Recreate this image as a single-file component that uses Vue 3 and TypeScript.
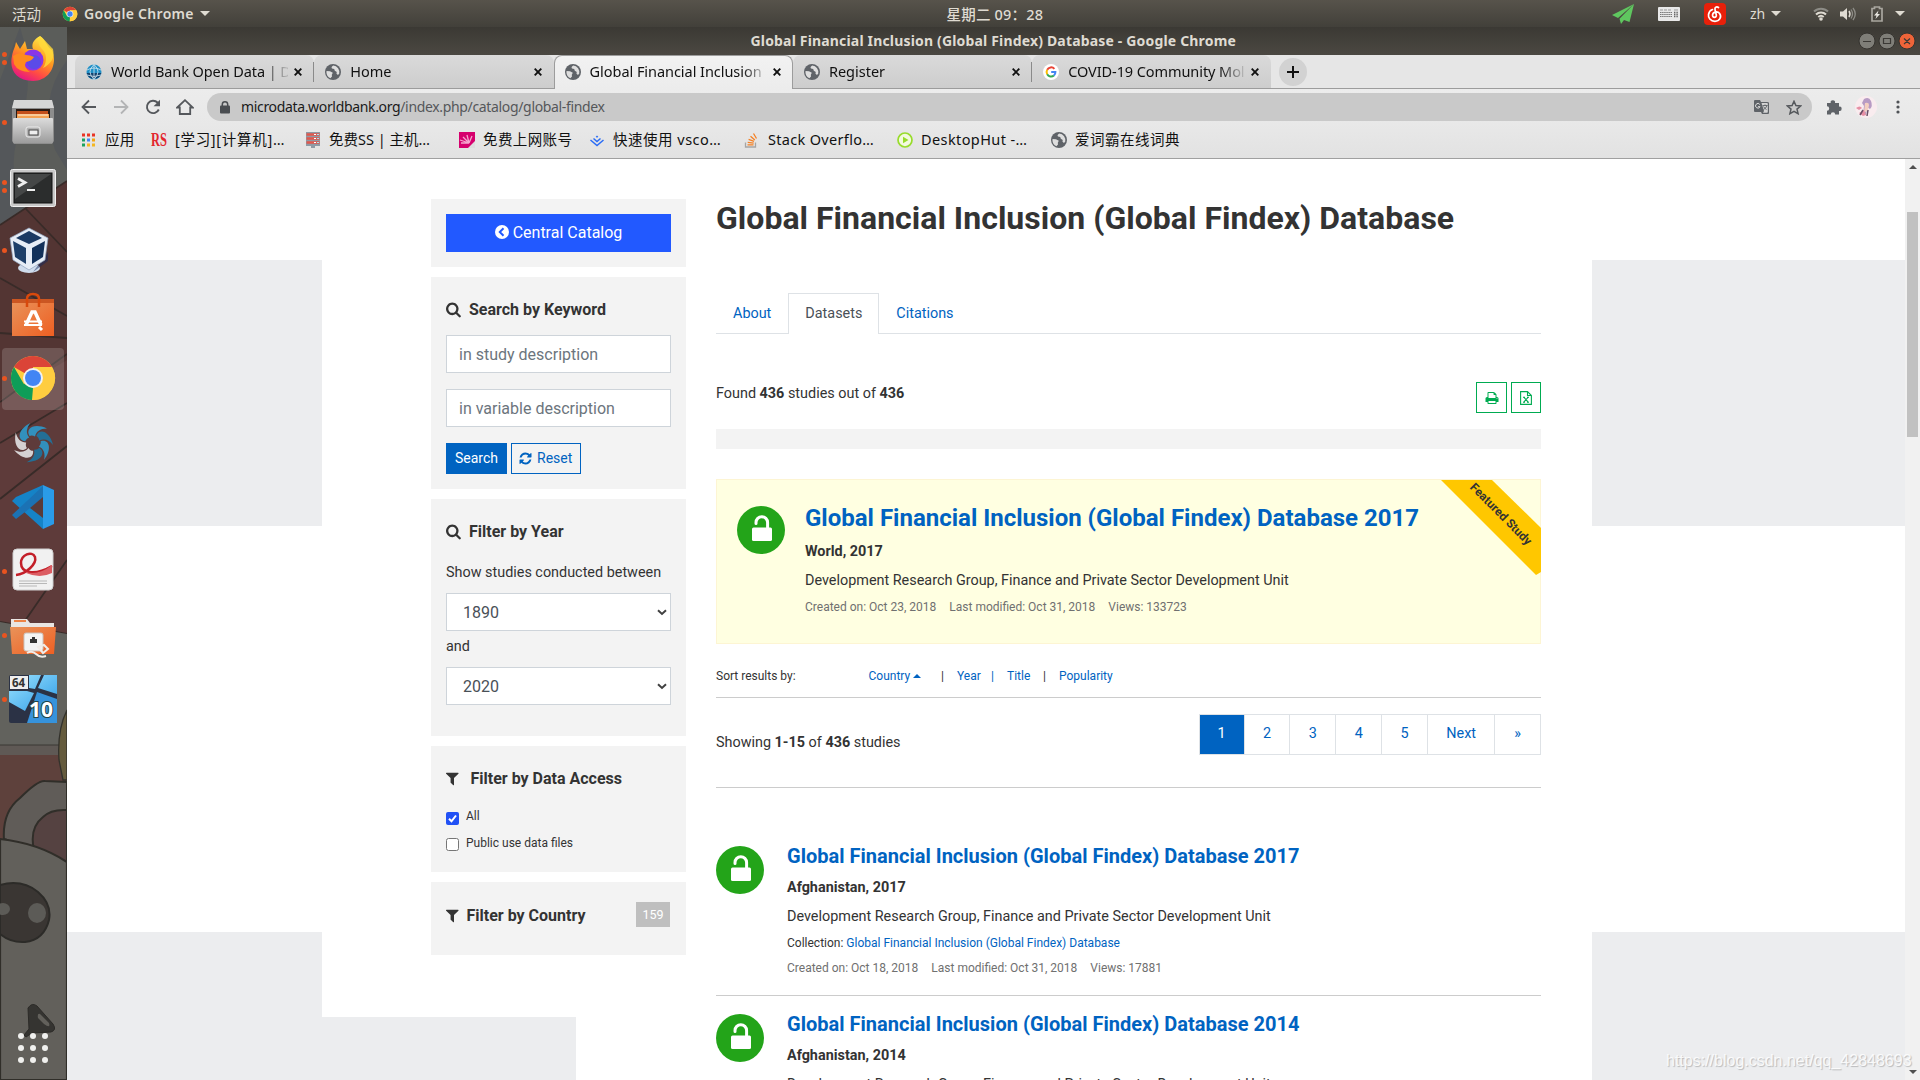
<script setup lang="ts">
interface Tab { title: string; icon: string; active?: boolean; sp: number }
interface Bookmark { label: string; icon: string; width: number; sp: number }
interface Study { title: string; place: string; created: string; views: string }

const tabs: Tab[] = [
  { title: 'World Bank Open Data | D', icon: 'wb', sp: -0.08 },
  { title: 'Home', icon: 'globe', sp: 0 },
  { title: 'Global Financial Inclusion', icon: 'globe', active: true, sp: -0.05 },
  { title: 'Register', icon: 'globe', sp: 0 },
  { title: 'COVID-19 Community Mol', icon: 'google', sp: -0.08 },
]

const bookmarks: Bookmark[] = [
  { label: '[学习][计算机]…', icon: 'rs', width: 154, sp: 0.7 },
  { label: '免费SS | 主机…', icon: 'server', width: 154, sp: 0 },
  { label: '免费上网账号', icon: 'fan', width: 130, sp: 0.4 },
  { label: '快速使用 vsco…', icon: 'juejin', width: 155, sp: 0.5 },
  { label: 'Stack Overflo…', icon: 'so', width: 153, sp: 0.32 },
  { label: 'DesktopHut -…', icon: 'play', width: 154, sp: 0.4 },
  { label: '爱词霸在线词典', icon: 'globe', width: 140, sp: 0.5 },
]

const dock = [
  { name: 'firefox', dots: 2 }, { name: 'files', dots: 1 }, { name: 'terminal', dots: 2 },
  { name: 'vbox', dots: 1 }, { name: 'software', dots: 0 }, { name: 'chrome', dots: 1 },
  { name: 'shutter', dots: 0 }, { name: 'vscode', dots: 0 }, { name: 'evince', dots: 1 },
  { name: 'ftp', dots: 1 }, { name: 'win', dots: 1 },
]

const studies: Study[] = [
  { title: 'Global Financial Inclusion (Global Findex) Database 2017', place: 'Afghanistan, 2017', created: 'Oct 18, 2018', views: '17881' },
  { title: 'Global Financial Inclusion (Global Findex) Database 2014', place: 'Afghanistan, 2014', created: 'Oct 18, 2018', views: '10542' },
]

const pages = ['1', '2', '3', '4', '5', 'Next', '»']
const unit = 'Development Research Group, Finance and Private Sector Development Unit'
const blades = [0, 51.4, 102.8, 154.3, 205.7, 257.1, 308.6]

const searchPath = 'M1216 832q0-185-131.5-316.5t-316.5-131.5-316.5 131.5-131.5 316.5 131.5 316.5 316.5 131.5 316.5-131.5 131.5-316.5zm512 832q0 52-38 90t-90 38q-54 0-90-38l-343-342q-179 124-399 124-143 0-273.5-55.5t-225-150-150-225-55.5-273.5 55.5-273.5 150-225 225-150 273.5-55.5 273.5 55.5 225 150 150 225 55.5 273.5q0 220-124 399l343 343q37 37 37 90z'
const filterPath = 'M1595 295q17 41-14 70l-493 493v742q0 42-39 59-13 5-25 5-27 0-45-19l-256-256q-19-19-19-45v-486l-493-493q-31-29-14-70 17-39 59-39h1280q42 0 59 39z'
const printPath = 'M448 1536h896v-256h-896v256zm0-640h896v-384h-160q-40 0-68-28t-28-68v-160h-640v640zm1152 64q0-26-19-45t-45-19-45 19-19 45 19 45 45 19 45-19 19-45zm128 0v416q0 13-9.5 22.5t-22.5 9.5h-224v160q0 40-28 68t-68 28h-960q-40 0-68-28t-28-68v-160h-224q-13 0-22.5-9.5t-9.5-22.5v-416q0-79 56.5-135.5t135.5-56.5h64v-544q0-40 28-68t68-28h672q40 0 88 20t76 48l152 152q28 28 48 76t20 88v256h64q79 0 135.5 56.5t56.5 135.5z'
const refreshPath = 'M1639 1056q0 5-1 7-64 268-268 434.5t-478 166.5q-146 0-282.5-55t-243.5-157l-129 129q-19 19-45 19t-45-19-19-45v-448q0-26 19-45t45-19h448q26 0 45 19t19 45-19 45l-137 137q71 66 161 102t187 36q134 0 250-65t186-179q11-17 53-117 8-23 30-23h192q13 0 22.5 9.5t9.5 22.5zm25-800v448q0 26-19 45t-45 19h-448q-26 0-45-19t-19-45 19-45l138-138q-148-137-349-137-134 0-250 65t-186 179q-11 17-53 117-8 23-30 23h-199q-13 0-22.5-9.5t-9.5-22.5v-7q65-268 270-434.5t480-166.5q146 0 284 55.5t245 156.5l130-129q19-19 45-19t45 19 19 45z'
</script>

<template>
  <div class="desktop">
    <svg class="defs" width="0" height="0">
      <defs>
        <symbol id="i-globe" viewBox="0 0 16 16">
          <circle cx="8" cy="8" r="8" fill="#5f6368" />
          <path d="M1.500 7 5 7.200l2.800 1.600-1 1.900.2 1.800-1.600 1.700A6.800 6.800 0 0 1 1.500 7z" fill="#dedede" />
          <path d="M8.200 1.500C6.800 2.200 6 3.600 7 4.600l2.200.4.600 1.700 2 1.200-.4 1.600 1.500 1.600 1.300-1.300A6.800 6.800 0 0 0 8.200 1.500z" fill="#dedede" />
        </symbol>
        <symbol id="i-chrome" viewBox="0 0 48 48">
          <circle cx="24" cy="24" r="22" fill="#ffcd40" />
          <path d="M24 24 L5 12.900A22 22 0 0 1 43 13H24z" fill="#db4437" />
          <path d="M5 12.900 14.500 29.500 24 34l-1 12A22 22 0 0 1 5 12.900z" fill="#0f9d58" />
          <path d="M43 13H24v8l9.500 8L23 46A22 22 0 0 0 43 13z" fill="#ffcd40" />
          <circle cx="24" cy="24" r="10" fill="#f1f1f1" />
          <circle cx="24" cy="24" r="8" fill="#4285f4" />
        </symbol>
        <symbol id="i-lock" viewBox="0 0 48 48">
          <circle cx="24" cy="24" r="24" fill="#23a419" />
          <rect x="15" y="21.500" width="20" height="13.500" rx="1.500" fill="#fff" />
          <path d="M19 17.500v-1a5.800 5.800 0 0 1 11.600 0v6" fill="none" stroke="#fff" stroke-width="3" stroke-linecap="round" />
        </symbol>
        <linearGradient id="g-ff" x1="0.800" y1="0" x2="0.300" y2="1">
          <stop offset="0" stop-color="#fff44f" /><stop offset=".45" stop-color="#ff9a1f" /><stop offset=".75" stop-color="#ff4a45" /><stop offset="1" stop-color="#e31587" />
        </linearGradient>
        <linearGradient id="g-gray" x1="0" y1="0" x2="0" y2="1"><stop offset="0" stop-color="#dcdcdc" /><stop offset="1" stop-color="#9c9c9c" /></linearGradient>
        <linearGradient id="g-or" x1="0" y1="0" x2="1" y2="1"><stop offset="0" stop-color="#e9935a" /><stop offset="1" stop-color="#ee5f22" /></linearGradient>
        <linearGradient id="g-win" x1="0" y1="0" x2="1" y2="1"><stop offset="0" stop-color="#9be2ff" /><stop offset="1" stop-color="#2d9be6" /></linearGradient>
      </defs>
    </svg>

    <header class="topbar">
      <div class="tb-left">
        <span class="act">活动</span>
        <svg width="16" height="16"><use href="#i-chrome" /></svg>
        <b class="appname">Google Chrome</b>
        <i class="caret"></i>
      </div>
      <div class="clock">星期二 09：28</div>
      <div class="tray">
        <svg class="t-plane" width="22" height="20" viewBox="0 0 22 20"><path d="M22 0 0 11l6 3zM22 0 7.500 14.800 9 20l3-4 5.500 2z" fill="#5fc75f" /></svg>
        <svg class="t-kb" width="22" height="14" viewBox="0 0 22 14"><rect width="22" height="14" rx="1" fill="#e8e8e8" /><path d="M2 3h3M6 3h3M10 3h3M16 3h4" stroke="#999" /><path d="M2 5.500h12M2 7.500h12M2 9.500h12" stroke="#777" stroke-width="1.200" stroke-dasharray="1.500 .6" /><path d="M16 5.500h4M16 7.500h4M16 9.500h4" stroke="#666" stroke-width="1.300" stroke-dasharray="1 .6" /></svg>
        <svg class="t-ne" width="22" height="22" viewBox="0 0 22 22"><rect width="22" height="22" rx="4" fill="#e8200a" /><path d="M14.500 4.500c-2-1.500-4 0-3.500 2l1.300 5.500a1.900 1.900 0 1 1-3.700 0c0-3 5-4.200 7-1.500 2.400 3.400 0 7.800-4.600 7.800S4 14.500 4.500 11.500 7 7 8.500 6.500" fill="none" stroke="#fff" stroke-width="1.700" stroke-linecap="round" /></svg>
        <span class="zh">zh</span><i class="caret c1"></i>
        <svg class="t-wifi" width="16" height="14" viewBox="0 0 16 14"><g fill="none" stroke-width="2"><path d="M1 4.500a10 10 0 0 1 14 0" stroke="#8d8c86" /><path d="M3 7.500a7 7 0 0 1 10 0" stroke="#dfdbd2" /><path d="M5.300 10a4 4 0 0 1 5.400 0" stroke="#dfdbd2" /></g><circle cx="8" cy="12" r="1.800" fill="#dfdbd2" /></svg>
        <svg class="t-vol" width="16" height="14" viewBox="0 0 16 14"><path d="M0 4.500h3L7 1v12L3 9.500H0z" fill="#dfdbd2" /><path d="M9 4q2 3 0 6" stroke="#dfdbd2" fill="none" stroke-width="1.500" /><path d="M11 2.500q3 4.500 0 9M13 1q4.500 6 0 12" stroke="#8d8c86" fill="none" stroke-width="1.300" /></svg>
        <svg class="t-bat" width="12" height="16" viewBox="0 0 12 16"><path d="M1 2.500h2.500V1h5v1.500H11V15H1z" fill="none" stroke="#a9a69f" stroke-width="1.700" /><path d="M7.500 4.500 3 9.500h2.500L4.500 13 9 8H6.500z" fill="#e8e6e0" /></svg>
        <i class="caret c2"></i>
      </div>
    </header>

    <div class="body">
      <aside class="dock">
        <svg class="wall" width="67" height="1053" viewBox="0 27 67 1053">
          <rect y="27" width="67" height="1053" fill="#5b5d5a" />
          <path d="M20 27q16 50 0 100t8 88l-28 20V80zM67 60q-30 40-12 90l12 20z" fill="#50535a" opacity=".6" />
          <path d="M0 225 67 181v453L0 622z" fill="#533533" />
          <path d="M0 400 67 360v274L0 622z" fill="#5e3b3a" />
          <path d="M0 225 67 181M26 209l41 43M0 278l67 38M0 333l67 5M0 402l67-48M0 443l67-40M0 499l67-53M20 628 67 560M0 622l67 12" stroke="#382b28" stroke-width="1.800" fill="none" />
          <path d="M0 622l67 12v111H0z" fill="#62625d" />
          <path d="M0 745h67v115H0z" fill="#5e413c" /><rect y="745" width="67" height="10" fill="#5f5955" />
          <path d="M0 745h60" stroke="#3a3834" stroke-width="1.200" />
          <path d="M67 710q-10 20-8 50l4 20h4z" fill="#655b3d" stroke="#33322c" stroke-width="1.300" />
          <path d="M4 840Q2 812 20 798 38 780 45 781L67 782v80L10 842Q5 838 4 840z" fill="#605c58" stroke="#302e29" stroke-width="2" />
          <path d="M34 850q-5-22 9-33 8-8 24-7v60z" fill="#554241" stroke="#302e29" stroke-width="2" />
          <path d="M0 839q38 4 67 23v218H0z" fill="#62605b" stroke="#302e29" stroke-width="2.200" />
          <path d="M0 885q22-6 38 7 14 12 11 28-5 20-24 22-14 1-25-8z" fill="#3a3633" stroke="#2c2b28" stroke-width="2" />
          <ellipse cx="37" cy="913" rx="9" ry="10" fill="#5c5b57" /><ellipse cx="3" cy="909" rx="7" ry="6" fill="#5c5b57" />
          <path d="M28 1008q4-6 9-2l16 18q4 6-2 8l-19 1-6 4-2-2 5-6z" fill="#353431" stroke="#2c2b28" /><path d="M40 1014l9 9q2 6-5 1l-6-6q-1-5 2-4z" fill="#62605b" />
        </svg>
        <div v-for="d in dock" :key="d.name" class="slot" :class="[d.name, { sel: d.name === 'chrome' }]">
          <span class="dots"><i v-for="n in d.dots" :key="n"></i></span>
          <svg width="48" height="48" viewBox="0 0 48 48">
            <template v-if="d.name === 'firefox'">
              <path d="M31 2c6 4 6 10 12 14 6 14-2 31-19 31S0 36 3 22c1-6 3-8 4-14l4 7 5-8 2 8h6c-2-5 1-10 7-13z" fill="url(#g-ff)" />
              <circle cx="24" cy="26" r="10.500" fill="#8a35e8" /><circle cx="25" cy="28" r="7" fill="#5b4be8" />
              <path d="M4 22q7-5 13-1 4 0 8 2-2 4-8 5-3 5 4 10-12 0-16-8z" fill="#ff8b1e" />
              <path d="M31 2c-3 6-1 10 3 14 4 5 4 12 0 18 8-4 12-10 10-19-4-4-7-8-13-13z" fill="#ffd93a" opacity=".8" />
            </template>
            <template v-else-if="d.name === 'files'">
              <path d="M5 3h38l2 7v33l-2 3H5l-2-3V10z" fill="#8d8d8d" /><path d="M5 2h38l2 8H3z" fill="#d6d6d6" /><rect x="7" y="11" width="34" height="10" fill="#2a1b14" />
              <path d="M8 13h31v3H8z" fill="#c4501b" /><path d="M8 16h32v5H8z" fill="#f4a253" /><path d="M9 17h30" stroke="#fff3df" /><rect x="4" y="20" width="40" height="25" rx="1" fill="url(#g-gray)" />
              <rect x="17" y="29" width="14" height="10" rx="2" fill="#b2b2b2" stroke="#ececec" /><rect x="20" y="32" width="9" height="5" fill="#eee" stroke="#444" />
            </template>
            <template v-else-if="d.name === 'terminal'">
              <rect x="1.500" y="5.500" width="45" height="37" rx="2" fill="#c9c9c9" stroke="#f1f1f1" /><rect x="5" y="9" width="38" height="30" fill="#2b2d2d" stroke="#111" /><path d="M6 10h36L6 35z" fill="#454747" />
              <path d="M9 14.500l7 4-7 4" stroke="#eee" stroke-width="2.800" fill="none" /><path d="M18 26h8" stroke="#eee" stroke-width="2" />
            </template>
            <template v-else-if="d.name === 'vbox'">
              <ellipse cx="20" cy="42" rx="11" ry="5" fill="#cfdcec" /><path d="M24 46l15-11V26z" fill="#14275d" opacity=".5" />
              <path d="M20 2 39 12 36 34 20 44 4 34 1 12z" fill="#e6edf6" stroke="#8fa3be" stroke-width=".7" /><path d="M20 5 33 12 20 18 7 12z" fill="#1b3a63" /><path d="M4 15l13 7v16L6 31z" fill="#1d3f69" /><path d="M36 15l-13 7v16l11-7z" fill="#12315a" />
            </template>
            <template v-else-if="d.name === 'software'">
              <path d="M3 10h42v35H3z" fill="url(#g-or)" /><path d="M3 8h42v4H3z" fill="#cb5622" /><path d="M18 16V8q0-5 6-5t6 5v8" fill="none" stroke="#d8490c" stroke-width="2.500" />
              <path d="M17 34l6-13h3l6 13" fill="none" stroke="#fff" stroke-width="3.500" /><path d="M15 30.500h18M15 34h18" stroke="#fff" stroke-width="1.800" /><path d="M30 36l3 3" stroke="#fff" stroke-width="3" />
            </template>
            <use v-else-if="d.name === 'chrome'" href="#i-chrome" />
            <template v-else-if="d.name === 'shutter'">
              <path v-for="(a, n) in blades" :key="a" :transform="`rotate(${a} 24 24)`" d="M20.500 17C16 9.500 25 3.500 38 9.500 31 9.500 27 12.500 26 17.500 24 16.300 22 16.200 20.500 17z" :fill="n > 3 && n < 6 ? '#d5d2d3' : n % 2 ? '#236f96' : '#3290bd'" />
            </template>
            <template v-else-if="d.name === 'vscode'">
              <path d="M34 2v44L3 18l4-4z" fill="#1583c7" /><path d="M34 15 7 36l-4-4L34 3z" fill="#1b72b4" /><path d="M34 14 21 25l13 10z" fill="#5a3a39" /><path d="M34 2l11 5v34l-11 5z" fill="#2a9be8" />
            </template>
            <template v-else-if="d.name === 'evince'">
              <rect x="4" y="4" width="40" height="41" rx="4" fill="#f1f1f1" stroke="#cfcfcf" /><path d="M7 30C17 29 28 19 26 12 23 5 12 10 12 18c0 9 12 14 31 3" fill="none" stroke="#c31f29" stroke-width="2.500" /><path d="M17 27q12 4 26-7v8q-12 6-26 0z" fill="#dc5d63" /><path d="M10 36h28M10 38.500h28M10 41h18" stroke="#aaa" stroke-width=".8" />
            </template>
            <template v-else-if="d.name === 'ftp'">
              <path d="M2 6h16l3 4h24v12H2z" fill="#e9e6e3" /><path d="M5 8h12" stroke="#ed8345" stroke-width="2" /><path d="M1 14h46l-2 27H3z" fill="url(#g-or)" /><rect x="15" y="20" width="19" height="18" rx="2" fill="#f3f3f3" stroke="#c9c1bb" /><path d="M21 30v-4h2v-2h3v2h2v4z" fill="#333" />
              <path d="M29 34l6-2 4 4-5 4zM18 40q5-3 9 1t10 2" fill="none" stroke="#f0ece8" stroke-width="2" />
            </template>
            <template v-else>
              <rect width="48" height="48" rx="2" fill="#2b3245" /><path d="M20 0h12l-6 14-6-1zM35 0h13v19L29 13zM0 16h18l7 2-9 18L0 27z" fill="url(#g-win)" /><path d="M28 17l20 7v24H18z" fill="#3693dc" />
              <rect x="1" y="1" width="18" height="13" fill="#eee" /><text x="3" y="12" font-size="11.500" font-weight="700" fill="#333">64</text><text x="20" y="42" font-size="21" font-weight="700" fill="#fff" stroke="#244" stroke-width="2" paint-order="stroke">10</text>
            </template>
          </svg>
        </div>
        <div class="apps"><i v-for="n in 9" :key="n"></i></div>
      </aside>

      <section class="window">
        <div class="titlebar">
          <b>Global Financial Inclusion (Global Findex) Database - Google Chrome</b>
          <div class="wbtns">
            <svg width="58" height="20" viewBox="0 0 58 20"><g stroke="#35332f"><circle cx="9" cy="10" r="8" fill="#7f7e78" /><circle cx="29" cy="10" r="8" fill="#7f7e78" /><circle cx="49" cy="10" r="8" fill="#ee6439" /></g><path d="M5 10.500h8M25.500 7.500h7v5h-7zM46 7.500l6 5.500M52 7.500 46 13" fill="none" stroke="#3b3935" stroke-width="1.200" /></svg>
          </div>
        </div>

        <nav class="tabstrip">
          <div v-for="t in tabs" :key="t.title" class="tab" :class="{ active: t.active }">
            <svg class="fav" width="16" height="16" viewBox="0 0 16 16">
              <use v-if="t.icon === 'globe'" href="#i-globe" />
              <template v-else-if="t.icon === 'wb'"><circle cx="8" cy="8" r="7.500" fill="#1e8fc6" /><path d="M.7 9a7.500 7.500 0 0 0 14.600 0z" fill="#12426e" /><path d="M8 .5v15M1 6q7-4 14 0M1 11q7 3 14 0M8 .5q-8 7 0 15M8 .5q8 7 0 15" fill="none" stroke="#d5e9f3" stroke-width=".8" /></template>
              <template v-else><circle cx="8" cy="8" r="8" fill="#fff" /><g fill="none" stroke-width="2"><path d="M4.200 5.800a4.400 4.400 0 0 1 7.200-1" stroke="#ea4335" /><path d="M4.200 5.800a4.500 4.500 0 0 0 0 4.400" stroke="#fbbc05" /><path d="M4.200 10.200a4.400 4.400 0 0 0 6.700 1.300" stroke="#34a853" /><path d="M10.900 11.500A4.500 4.500 0 0 0 12.400 8H8.200" stroke="#4285f4" /></g></template>
            </svg>
            <span class="tt" :style="{ letterSpacing: t.sp + 'px' }">{{ t.title }}</span>
            <svg width="8" height="8" viewBox="0 0 8 8"><path d="M.7.7l6.600 6.600M7.300.7.7 7.300" stroke="#111" stroke-width="1.900" /></svg>
          </div>
          <span class="plus"><svg width="12" height="12"><path d="M6 0v12M0 6h12" stroke="#111" stroke-width="2" /></svg></span>
        </nav>

        <div class="toolbar">
          <svg width="16" height="16" viewBox="0 0 16 16"><path d="M15 8H2M8 1.500 1.500 8 8 14.500" fill="none" stroke="#55585c" stroke-width="1.800" /></svg>
          <svg width="16" height="16" viewBox="0 0 16 16"><path d="M1 8h13M8 1.500 14.500 8 8 14.500" fill="none" stroke="#b3b4b5" stroke-width="1.800" /></svg>
          <svg width="16" height="16" viewBox="0 0 16 16"><path d="M13.800 10.500A6.200 6.200 0 1 1 12.500 3.500L14 5" fill="none" stroke="#55585c" stroke-width="1.900" /><path d="M15 .8v6.400H8.600z" fill="#55585c" /></svg>
          <svg width="18" height="16" viewBox="0 0 18 16"><path d="M1.200 8.500 9 1.200l7.800 7.300h-2.600V15H3.800V8.500z" fill="none" stroke="#55585c" stroke-width="1.800" /></svg>
          <div class="omni">
            <svg width="10" height="13" viewBox="0 0 10 13"><rect y="4.500" width="10" height="8" rx="1" fill="#4a4d51" /><path d="M2.300 5V3.500a2.700 2.700 0 0 1 5.400 0V5" fill="none" stroke="#4a4d51" stroke-width="1.500" /></svg>
            <span class="url"><em>microdata.worldbank.org</em>/index.php/catalog/global-findex</span>
            <svg width="15" height="14" viewBox="0 0 15 14"><path d="M0 1q0-1 1-1h5l1 2h6q2 0 2 1v10q0 1-1 1H8l-1-2H1q-1 0-1-1z" fill="#5f6368" /><path d="M7.500 3H13q.8 0 .8.800V12q0 .8-.8.800H9l1-1.800z" fill="#d4d4d4" /><path d="M8.500 5.500h5M11 4.500v1M13 5.500q-1 3-3.500 4M9.500 6.500q1 2 3 3" stroke="#5f6368" stroke-width=".9" fill="none" /><path d="M5.800 4.500A2.300 2.300 0 1 0 6 6.700H4" stroke="#ddd" stroke-width="1" fill="none" /></svg>
            <svg width="16" height="15" viewBox="0 0 16 15"><path d="M8 1.300l1.900 4.300 4.700.4-3.600 3.100 1.100 4.600L8 11.300l-4.100 2.400L5 9.100 1.400 6l4.700-.4z" fill="none" stroke="#55585c" stroke-width="1.500" /></svg>
          </div>
          <svg class="puz" width="16" height="16" viewBox="0 0 16 16"><path d="M1 4h3.700a2.200 2.200 0 1 1 4.300 0H13v3.700a2.200 2.200 0 1 1 0 4.300v3.500H9.200a2.200 2.200 0 0 0-4.400 0H1v-3.800a2.200 2.200 0 0 0 0-4.400z" fill="#5f6368" /></svg>
          <svg class="ava" width="22" height="22" viewBox="0 0 22 22"><circle cx="11" cy="11" r="11" fill="#f9ecef" /><path d="M9 3q5-3 7 2t-1 8l-3-2-1 8-3-1 1-8-2-3z" fill="#b79bc4" /><path d="M10 7q4-1 4 2l-1 5-4 3z" fill="#f4cfc0" /><path d="M1 12q4-3 6 0l-3 2zM4 17l5-3 2 5-3 1z" fill="#e68fa4" /><path d="M8 14l-3 5M13 14l-1 6" stroke="#695066" stroke-width="1.500" /></svg>
          <svg width="4" height="14" viewBox="0 0 4 14"><g fill="#4f5256"><circle cx="2" cy="2" r="1.600" /><circle cx="2" cy="7" r="1.600" /><circle cx="2" cy="12" r="1.600" /></g></svg>
        </div>

        <div class="bookmarks">
          <svg width="14" height="14" viewBox="0 0 14 14"><path d="M0 2h3M5 2h3M10 2h3" stroke="#e93525" stroke-width="3" /><path d="M0 7h3" stroke="#1aa260" stroke-width="3" /><path d="M5 7h3" stroke="#4285f4" stroke-width="3" /><path d="M10 7h3" stroke="#f4a512" stroke-width="3" /><path d="M0 12h3" stroke="#1aa260" stroke-width="3" /><path d="M5 12h8" stroke="#f4b722" stroke-width="3" stroke-dasharray="3 2" /></svg>
          <span class="bm-apps">应用</span>
          <div v-for="b in bookmarks" :key="b.label" class="bm" :style="{ width: b.width + 'px' }">
            <svg width="16" height="16" viewBox="0 0 16 16" overflow="visible">
              <use v-if="b.icon === 'globe'" href="#i-globe" />
              <text v-else-if="b.icon === 'rs'" x="0" y="14" class="rs" textLength="16" lengthAdjust="spacingAndGlyphs">RS</text>
              <g v-else-if="b.icon === 'server'"><path d="M1 0h14v14H1zM6 14h4v2H6z" fill="#8f9aa5" /><path d="M1.500 2.500h13M1.500 6.500h13M1.500 10.500h13" stroke="#e2574c" stroke-width="2.500" /><path d="M9 2.500h2M9 6.500h2M9 10.500h2" stroke="#fff" /><path d="M12 2.500h2M12 6.500h2M12 10.500h2" stroke="#a5e4ee" /></g>
              <g v-else-if="b.icon === 'fan'"><rect width="16" height="16" fill="#d6006e" /><path d="M9 16l7-7v7z" fill="#ddd" /><path d="M10 11 1 8M10 11 4 5M10 11 8 3M10 11l3-7M10 11 2 11" stroke="#f5a6cf" stroke-width="1.300" /></g>
              <g v-else-if="b.icon === 'juejin'" fill="none" stroke="#2a6cf6" stroke-width="1.500"><path d="M1.500 8 8 13.500 14.500 8M4.500 6.500 8 9.500l3.500-3" /><path d="M8 3.500l1.300 1.200L8 5.800 6.700 4.700z" fill="#2a6cf6" stroke="none" /></g>
              <g v-else-if="b.icon === 'so'" fill="none" stroke-width="1.300"><path d="M1.500 10.500v4.500h10v-4.500" stroke="#a5a5a5" /><path d="M3.500 12.800h6M3.700 10.300l6 .8M4.600 7.300l5.400 2M6.500 4.200l4.300 3.800M9.500 1.500l3 5" stroke="#f48024" /></g>
              <g v-else><circle cx="8" cy="8" r="7" fill="#f3fadf" stroke="#98dc2c" stroke-width="1.700" /><path d="M6 4.800 11.500 8 6 11.200z" fill="#98dc2c" /></g>
            </svg>
            <span :style="{ letterSpacing: b.sp + 'px' }">{{ b.label }}</span>
          </div>
        </div>

        <div class="viewport">
          <div class="blocks">
            <i class="bl b1"></i><i class="bl b2"></i><i class="bl b3"></i><i class="bl b4"></i><i class="bl b5"></i>
          </div>

          <div class="container">
            <div class="side">
              <div class="card c-a">
                <a class="cc"><svg width="14" height="14" viewBox="0 0 14 14"><circle cx="7" cy="7" r="7" fill="#fff" /><path d="M8.500 3.300 4.800 7l3.700 3.700" fill="none" stroke="#2259ff" stroke-width="2" /></svg>Central Catalog</a>
              </div>
              <div class="card c-b">
                <h6><svg width="16" height="16" viewBox="64 64 1792 1792"><path :d="searchPath" /></svg>Search by Keyword</h6>
                <div class="input">in study description</div>
                <div class="input second">in variable description</div>
                <div class="btns">
                  <span class="btn solid">Search</span>
                  <span class="btn"><svg width="14" height="14" viewBox="64 -64 1792 1792"><path :d="refreshPath" /></svg>Reset</span>
                </div>
              </div>
              <div class="card c-c">
                <h6><svg width="16" height="16" viewBox="64 64 1792 1792"><path :d="searchPath" /></svg>Filter by Year</h6>
                <p class="lbl show">Show studies conducted between</p>
                <div class="input sel">1890<svg width="10" height="7" viewBox="0 0 10 7"><path d="M1 1.300 5 5l4-3.700" /></svg></div>
                <p class="lbl and">and</p>
                <div class="input sel">2020<svg width="10" height="7" viewBox="0 0 10 7"><path d="M1 1.300 5 5l4-3.700" /></svg></div>
              </div>
              <div class="card c-d">
                <h6 class="fl"><svg width="16" height="16" viewBox="192 64 1792 1792"><path :d="filterPath" /></svg>Filter by Data Access</h6>
                <label class="ck first"><svg width="13" height="13" viewBox="0 0 13 13"><rect width="13" height="13" rx="2" fill="#2151f5" /><path d="M3 6.800 5.500 9.300 10 3.500" fill="none" stroke="#fff" stroke-width="2" /></svg>All</label>
                <label class="ck"><svg width="13" height="13" viewBox="0 0 13 13"><rect x=".5" y=".5" width="12" height="12" rx="2" fill="#fff" stroke="#767676" /></svg>Public use data files</label>
              </div>
              <div class="card c-e">
                <h6 class="fc"><svg width="16" height="16" viewBox="192 64 1792 1792"><path :d="filterPath" /></svg>Filter by Country<span class="badge">159</span></h6>
              </div>
            </div>

            <main class="main">
              <h1>Global Financial Inclusion (Global Findex) Database</h1>
              <div class="tabs"><a>About</a><a class="on">Datasets</a><a>Citations</a></div>
              <div class="found">
                <span>Found <b>436</b> studies out of <b>436</b></span>
                <div class="exp">
                  <i><svg width="14" height="14" viewBox="0 0 1792 1792"><path :d="printPath" fill="#00ab51" /></svg></i>
                  <i><svg width="12" height="14" viewBox="0 0 12 14"><path d="M.6.6h6.900l3.900 3.900v8.900H.6zM7.500.6v3.900h3.900" fill="none" stroke="#00ab51" stroke-width="1.100" /><path d="M3.800 6.200l4.400 5M8.200 6.200l-4.400 5M3 6.200h2M7 6.200h2M3 11.200h2M7 11.200h2" stroke="#00ab51" stroke-width="1.100" /></svg></i>
                </div>
              </div>
              <div class="bar"></div>

              <article class="feature">
                <svg class="lk" width="48" height="48"><use href="#i-lock" /></svg>
                <div class="info">
                  <h3>Global Financial Inclusion (Global Findex) Database 2017</h3>
                  <p class="place">World, 2017</p>
                  <p class="dev">{{ unit }}</p>
                  <p class="meta f"><span>Created on: Oct 23, 2018</span><span>Last modified: Oct 31, 2018</span><span>Views: 133723</span></p>
                </div>
                <div class="ribbon"><svg width="100" height="96"><path d="M0 0h51l49 48v44l-5 3z" fill="#ffc700" /></svg><b>Featured Study</b></div>
              </article>

              <div class="sort">
                <span class="s0">Sort results by:</span>
                <a class="s1">Country<i></i></a><span class="s2">|</span><a class="s3">Year</a><span class="s4">|</span><a class="s5">Title</a><span class="s6">|</span><a>Popularity</a>
              </div>

              <div class="pager">
                <span class="showing">Showing <b>1-15</b> of <b>436</b> studies</span>
                <div class="pages"><a v-for="p in pages" :key="p" :class="{ cur: p === '1', nx: p === 'Next' }">{{ p }}</a></div>
              </div>

              <div class="list">
                <article v-for="s in studies" :key="s.title" class="study">
                  <svg class="lk" width="48" height="48"><use href="#i-lock" /></svg>
                  <div class="info">
                    <h4>{{ s.title }}</h4>
                    <p class="place">{{ s.place }}</p>
                    <p class="dev">{{ unit }}</p>
                    <p class="coll">Collection: <a>Global Financial Inclusion (Global Findex) Database</a></p>
                    <p class="meta"><span>Created on: {{ s.created }}</span><span>Last modified: Oct 31, 2018</span><span>Views: {{ s.views }}</span></p>
                  </div>
                </article>
              </div>
            </main>
          </div>

          <div class="scroll"><i class="up"></i><i class="thumb"></i><i class="down"></i></div>
        </div>
      </section>
    </div>
    <div class="watermark">https://blog.csdn.net/qq_42848693</div>
  </div>
</template>

<style>
html, body { overflow: hidden; }
</style>

<style scoped>
* { box-sizing: border-box; }
.desktop { position: relative; width: 1920px; height: 1080px; overflow: hidden; display: flex; flex-direction: column; font-family: "Noto Sans", "Noto Sans CJK SC", sans-serif; background: #fff; }
.defs { position: absolute; }
h1, h3, h4, h6, p { margin: 0; }
svg { flex: none; display: block; }
.topbar { height: 27px; flex: none; display: grid; grid-template-columns: 1fr auto 1fr; align-items: center; background: linear-gradient(#57534b, #42403a); color: #dfdbd2; font-size: 14px; }
.tb-left { display: flex; align-items: center; padding-left: 12px; }
.act { width: 50px; font-size: 14.500px; }
.appname { margin-left: 6px; font-size: 14px; letter-spacing: .3px; width: 116px; white-space: nowrap; font-weight: 600; }
.caret { width: 0; height: 0; border: 5px solid transparent; border-top-color: #dfdbd2; border-bottom: 0; }
.clock { font-size: 14.500px; font-weight: 500; width: 96px; white-space: nowrap; margin-left: 69px; letter-spacing: .2px; }
.tray { display: flex; align-items: center; justify-content: flex-end; padding-right: 15px; }
.t-kb { margin-left: 24px; } .t-ne { margin-left: 24px; }
.zh { margin-left: 24px; width: 15px; font-size: 14px; } .c1 { margin-left: 6px; }
.t-wifi { margin-left: 32px; } .t-vol { margin-left: 11px; } .t-bat { margin-left: 15px; } .c2 { margin-left: 12px; }
.body { flex: 1; min-height: 0; display: flex; }
.dock { position: relative; width: 67px; flex: none; overflow: hidden; }
.wall { position: absolute; inset: 0; }
.slot { position: relative; width: 62px; height: 62px; margin: 0 0 2.200px 2px; display: flex; align-items: center; justify-content: center; border-radius: 4px; }
.slot.sel { background: rgba(255,255,255,.16); }
.slot.vbox > svg, .slot.win > svg { position: relative; top: -1px; }
.slot.terminal > svg { position: relative; top: 2px; }
.slot.ftp > svg { position: relative; top: 1px; }
.slot.evince > svg { position: relative; top: -3px; }
.dots { position: absolute; left: 0; top: 0; height: 62px; display: flex; flex-direction: column; justify-content: center; gap: 3px; }
.dots i { width: 5px; height: 5px; border-radius: 50%; background: #e95420; }
.apps { position: absolute; left: 18px; top: 1006px; display: grid; grid-template-columns: repeat(3, 6px); gap: 6px; }
.apps i { width: 6px; height: 6px; border-radius: 50%; background: #f0f0ee; }
.window { flex: 1; display: flex; flex-direction: column; min-width: 0; }
.titlebar { height: 28px; flex: none; background: linear-gradient(#3b3934, #4b4842); color: #dfdbd2; display: flex; align-items: center; justify-content: center; font-size: 14px; position: relative; padding-bottom: 2px; }
.titlebar b { white-space: nowrap; width: 486px; letter-spacing: .17px; }
.wbtns { position: absolute; right: 4px; top: 4px; }
.tabstrip { height: 34px; flex: none; background: #e6e6e6; display: flex; padding-left: 8px; border-bottom: 1px solid #9c9c9c; }
.tab { width: 239.300px; height: 33px; display: flex; align-items: center; padding: 0 12px 0 11px; background: linear-gradient(#dadada, #cdcdcd); border-radius: 8px 8px 0 0; position: relative; font-size: 14.500px; line-height: 20px; color: #111; }
.tab:first-child::after, .tab:nth-child(4)::after { content: ""; position: absolute; right: 0; top: 7px; width: 1px; height: 20px; background: #8a8a8a; }
.tab.active { background: linear-gradient(#f2f2f2, #ececec); height: 34px; border: 1px solid #9c9c9c; border-bottom: 0; padding: 0 11px 2px 10px; }
.fav { margin-right: 9px; }
.tt { flex: 1; width: 0; margin: -2px 6px 0 0; white-space: nowrap; -webkit-mask-image: linear-gradient(90deg, #000 86%, rgba(0,0,0,.15) 99%); mask-image: linear-gradient(90deg, #000 86%, rgba(0,0,0,.15) 99%); }
.plus { width: 28px; height: 28px; margin: 3px 0 0 8px; border-radius: 50%; background: #d2d2d2; display: flex; align-items: center; justify-content: center; }
.toolbar { height: 36px; flex: none; display: flex; align-items: center; padding-left: 14px; gap: 16px; background: linear-gradient(#ececec, #e8e8e8); }
.toolbar > svg:nth-child(4) { margin-left: -1px; }
.omni { width: 1605px; height: 28px; margin-left: -3px; border-radius: 14px; background: #c9c9c9; display: flex; align-items: center; padding: 0 10px 0 13px; gap: 24px; }
.url { flex: 1; margin: -2px 0 0 -13px; font-size: 14px; color: #55575a; letter-spacing: -.34px; }
.url em { font-style: normal; color: #1a1a1a; }
.omni svg:last-child { margin-left: -7px; }
.puz { margin-left: -2px; } .ava { margin-left: -3px; } .ava + svg { margin-left: 3px; }
.bookmarks { height: 34px; flex: none; display: flex; align-items: center; padding: 0 0 3px 15px; background: linear-gradient(#e8e8e8, #e2e2e2); border-bottom: 1px solid #a0a0a0; font-size: 14.500px; line-height: 20px; color: #111; }
.bm-apps { width: 46px; margin: -2px 0 0 9px; letter-spacing: .3px; }
.bm { display: flex; align-items: center; gap: 8px; white-space: nowrap; flex: none; }
.bm span { margin-top: -2px; }
.rs { font: bold 18px "Liberation Serif", serif; fill: #e3262e; }
.viewport { flex: 1; min-height: 0; position: relative; overflow: hidden; background: #fff; font-family: Roboto, sans-serif; color: #333; font-size: 14.400px; }
.blocks { position: absolute; inset: 0; }
.bl { position: absolute; background: #ecedef; }
.b1 { left: 0; top: 101px; width: 255px; height: 266px; } .b2 { left: 1525px; top: 101px; width: 313px; height: 266px; }
.b3 { left: 0; top: 773px; width: 255px; height: 148px; } .b4 { left: 0; top: 858px; width: 509px; height: 63px; } .b5 { left: 1525px; top: 773px; width: 313px; height: 148px; }
.container { position: relative; display: flex; width: 1110px; margin: 40px 0 0 364px; gap: 30px; }
.side { width: 255px; display: flex; flex-direction: column; gap: 10px; flex: none; }
.card { background: #f3f3f3; padding: 0 15px; }
.c-a { height: 68px; padding-top: 15px; } .c-b { height: 212px; } .c-c { height: 237px; } .c-d { height: 126px; } .c-e { height: 73px; }
.cc { height: 38px; background: #2259ff; color: #fff; font-size: 16px; display: flex; align-items: center; justify-content: center; gap: 4px; padding-bottom: 2px; }
h6 { font-size: 16px; font-weight: 700; line-height: 20px; padding-top: 23px; display: flex; align-items: center; gap: 7px; white-space: nowrap; }
h6 svg { fill: #333; }
h6.fl { gap: 8.500px; } h6.fc { gap: 4.500px; padding-top: 22px; height: 45px; }
.badge { position: relative; top: -1px; margin: 0 1px 0 auto; width: 34px; height: 25px; background: #bfbfbf; color: #fff; font-size: 12.500px; font-weight: 400; line-height: 25px; text-align: center; }
.input { height: 38px; background: #fff; border: 1px solid #ced4da; font-size: 16px; line-height: 38px; color: #6c757d; padding-left: 12px; margin-top: 15px; white-space: nowrap; }
.input.second { margin-top: 16px; }
.input.sel { margin: 0; padding: 2px 3px 0 16px; line-height: 34px; color: #495057; display: flex; align-items: center; justify-content: space-between; }
.sel svg { margin-top: -2px; }
.sel svg path { fill: none; stroke: #404040; stroke-width: 2; }
.btns { display: flex; gap: 4px; margin-top: 16px; }
.btn { height: 31px; border: 1px solid #0063c1; color: #0063c1; display: flex; align-items: center; padding: 0 7px 2px; width: 70px; gap: 4px; font-size: 14px; }
.btn svg { fill: #0063c1; }
.btn.solid { background: #0063c1; color: #fff; width: 61px; padding-left: 8px; }
.lbl { line-height: 20px; white-space: nowrap; }
.show { margin: 21px 0 10px; } .and { margin: 6px 0 10px; }
.ck { display: flex; font-size: 12px; line-height: 14px; height: 14px; gap: 7px; margin-top: 13px; }
.ck svg { margin-top: 2px; }
.ck.first { margin-top: 20px; } .ck.first svg { margin-top: 3px; }
.main { width: 825px; }
h1 { font-size: 32px; line-height: 38px; font-weight: 700; white-space: nowrap; letter-spacing: .015px; }
.tabs { margin-top: 56px; height: 41px; border-bottom: 1px solid #dee2e6; display: flex; }
.tabs a { height: 41px; line-height: 40px; padding: 0 16px; border: 1px solid transparent; color: #0063c1; }
.tabs a.on { background: #fff; border-color: #dee2e6; border-bottom: 0; color: #495057; }
.found { margin-top: 48px; height: 31px; display: flex; justify-content: space-between; line-height: 24px; }
.exp { display: flex; gap: 4px; }
.exp i { width: 31px; height: 31px; border: 1px solid #00ab51; display: flex; align-items: center; justify-content: center; }
.exp i + i { width: 30px; }
.bar { margin-top: 16px; height: 20px; background: #f3f3f3; }
.feature { position: relative; margin-top: 30px; height: 165px; background: #ffffe1; border: 1px solid #fdf5d3; display: flex; padding: 0 0 0 20px; }
.feature .lk { margin-top: 26px; } .feature .info { margin-left: 20px; padding-top: 24px; }
h3 { font-size: 24px; line-height: 28px; color: #0063c1; white-space: nowrap; }
.place, .dev { line-height: 20px; margin-top: 9px; white-space: nowrap; }
.place { font-weight: 700; margin-top: 10px; }
.meta { font-size: 12px; line-height: 18px; color: #707070; margin-top: 7px; display: flex; gap: 13px; white-space: nowrap; }
.ribbon { position: absolute; right: -1px; top: 0; width: 100px; height: 96px; overflow: hidden; }
.ribbon b { position: absolute; left: 10px; top: 26px; width: 100px; text-align: center; line-height: 16px; font-size: 12px; transform: rotate(45deg); white-space: nowrap; }
.sort { margin-top: 22px; height: 32px; border-bottom: 1px solid #ccc; display: flex; line-height: 20px; font-size: 12px; white-space: nowrap; }
.sort a, .coll a { color: #0063c1; }
.s0 { width: 152.500px; } .s1 { width: 72.500px; } .s2 { width: 16px; } .s3 { width: 34px; } .s4 { width: 16px; color: #0063c1; } .s5 { width: 36px; } .s6 { width: 16px; }
.s1 i { display: inline-block; margin-left: 3px; border: 4px solid transparent; border-bottom-color: #0063c1; border-top: 0; vertical-align: 2px; }
.pager { height: 90px; border-bottom: 1px solid #ccc; display: flex; justify-content: space-between; padding-top: 16px; }
.showing { line-height: 20px; margin-top: 19px; }
.pages { display: flex; height: 41px; border: 1px solid #dee2e6; }
.pages a { width: 45.900px; border-left: 1px solid #dee2e6; text-align: center; line-height: 37px; color: #0063c1; }
.pages a.nx { width: 67px; } .pages a.cur { background: #0063c1; color: #fff; border-left: 0; width: 44px; }
.list { padding-top: 40px; }
.study { height: 168px; border-bottom: 1px solid #ccc; display: flex; gap: 23px; padding-top: 16px; }
.study .lk { margin-top: 2px; }
h4 { font-size: 20px; line-height: 24px; color: #0063c1; white-space: nowrap; letter-spacing: .015px; }
.coll { font-size: 12px; line-height: 18px; margin-top: 7px; }
.scroll { position: absolute; right: 0; top: 0; width: 15px; height: 921px; background: #f1f1f1; }
.scroll i { position: absolute; }
.thumb { left: 2px; top: 53px; width: 11px; height: 225px; background: #c1c1c1; }
.up { left: 4px; top: 6px; border: 4px solid transparent; border-bottom-color: #505050; border-top: 0; }
.down { left: 4px; bottom: 6px; border: 4px solid transparent; border-top-color: #505050; border-bottom: 0; }
.watermark { position: absolute; left: 1666px; top: 1050px; font: 16px/22px "Liberation Sans", sans-serif; color: rgba(255,255,255,.85); text-shadow: 1px 1px 1px rgba(0,0,0,.22); white-space: nowrap; }
</style>
